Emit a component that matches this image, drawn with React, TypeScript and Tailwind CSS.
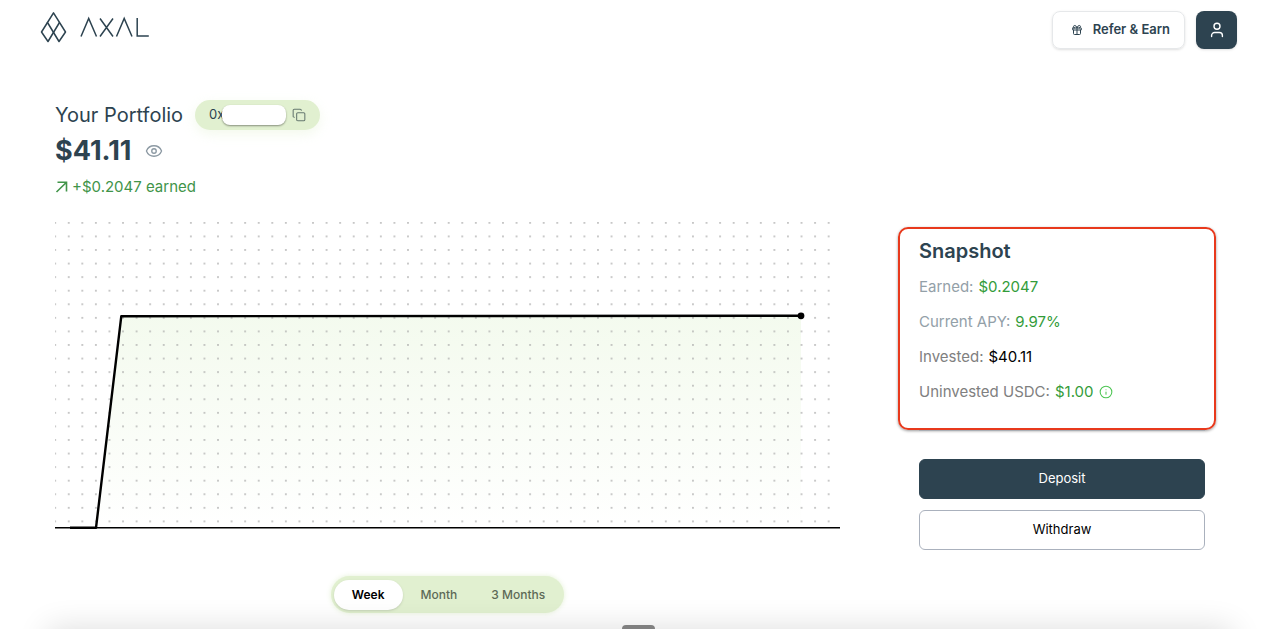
import React, { useState } from "react";
import { Copy, Eye, Gift, Info } from "lucide-react";

const ranges = ["Week", "Month", "3 Months"];

const stats = [
  { label: "Earned:", value: "$0.2047", labelClass: "text-[#93a0a8]", valueClass: "text-[#339c3a]" },
  { label: "Current APY:", value: "9.97%", labelClass: "text-[#93a0a8]", valueClass: "text-[#339c3a]" },
  { label: "Invested:", value: "$40.11", labelClass: "text-[#808080]", valueClass: "text-black" },
  { label: "Uninvested USDC:", value: "$1.00", labelClass: "text-[#808080]", valueClass: "text-[#339c3a]", info: true },
];

function Logo() {
  return (
    <a href="#" aria-label="Axal" className="block text-[#2d4350]">
      <svg width="110" height="32" viewBox="0 0 110 32" fill="none" stroke="currentColor" strokeWidth="1.5" strokeLinejoin="round">
        <path d="M13.5 1.8 L7.5 11.5 L19 30.5 L25.5 21 L13.5 1.8 Z" />
        <path d="M19.5 11.5 L8 30.5 L1.5 21 L7.5 11.5" />
        <path d="M41 25.5 L48.7 7.5 L56.5 25.5" strokeLinejoin="miter" />
        <path d="M60 7.5 L73 25.5 M73 7.5 L60 25.5" />
        <path d="M76.5 25.5 L84.2 7.5 L92 25.5" strokeLinejoin="miter" />
        <path d="M97.2 7 V25 H108.8" strokeLinejoin="miter" />
      </svg>
    </a>
  );
}

function Chart() {
  return (
    <svg viewBox="0 0 785 308" className="block w-full" role="img" aria-label="Portfolio value over the week">
      <defs>
        <pattern id="dots" width="13.57" height="13.57" patternUnits="userSpaceOnUse" x="-6.6" y="-5.9">
          <circle cx="6.78" cy="6.78" r="0.85" fill="#a8a8a8" />
        </pattern>
        <linearGradient id="area" x1="0" y1="0" x2="0" y2="1">
          <stop offset="0" stopColor="#dff2d0" stopOpacity="0.36" />
          <stop offset="0.85" stopColor="#dff2d0" stopOpacity="0.06" />
          <stop offset="1" stopColor="#dff2d0" stopOpacity="0" />
        </linearGradient>
      </defs>
      <path d="M41 306 L66 94 L746 94 V306 Z" fill="url(#area)" />
      <rect width="776" height="303" fill="url(#dots)" />
      <path d="M0 305.8 H785" stroke="#000" strokeWidth="1.6" />
      <path d="M15 305.8 H41 L66.3 94.2 L746 93.8" fill="none" stroke="#000" strokeWidth="2.4" strokeLinejoin="round" />
      <circle cx="746" cy="93.8" r="3.4" fill="#000" />
    </svg>
  );
}

export default function App() {
  const [range, setRange] = useState("Week");
  return (
    <div className="relative min-h-screen overflow-hidden bg-white font-['Inter',sans-serif] text-[#2d4350]">
      <header className="flex items-start justify-between pt-[11px] pr-[43px] pl-10">
        <Logo />
        <div className="flex items-center gap-[11px]">
          <button className="flex h-[38px] items-center gap-[10px] rounded-lg border border-[#e6e8ea] pr-[14px] pl-[18px] text-[13px] font-semibold shadow-sm">
            <Gift size={12} strokeWidth={2} />
            Refer &amp; Earn
          </button>
          <button aria-label="Account" className="flex h-[38px] w-[41px] items-center justify-center rounded-lg bg-[#2d4350] text-white shadow">
            <svg width="14" height="16" viewBox="0 0 14 16" fill="none" stroke="currentColor" strokeWidth="1.4" strokeLinecap="round">
              <circle cx="7" cy="4.2" r="3" />
              <path d="M1.6 14.6 V13.5 A3 3 0 0 1 4.6 10.5 H9.4 A3 3 0 0 1 12.4 13.5 V14.6" />
            </svg>
          </button>
        </div>
      </header>

      <main className="flex gap-[58px] pt-[51px] pr-16 pl-[55px]">
        <section className="min-w-0 flex-1">
          <div className="flex items-center gap-3">
            <h1 className="text-xl">Your Portfolio</h1>
            <div className="flex h-[30px] items-center rounded-full bg-[#e1f0d0] px-[14px] text-[13px] shadow-[0_4px_12px_rgba(225,240,208,0.4)]">
              <span>0x</span>
              <span className="-ml-[2px] h-5 w-16 rounded-lg bg-white shadow-[0_1px_2px_rgba(0,0,0,0.4)]" />
              <button aria-label="Copy address" className="ml-[6px] text-[#66786f]">
                <Copy size={14} strokeWidth={1.8} />
              </button>
            </div>
          </div>
          <div className="mt-[3px] flex h-9 items-center gap-[14px]">
            <p className="text-[27px] font-bold">$41.11</p>
            <button aria-label="Hide balance" className="text-[#8c99a3]">
              <Eye size={18} strokeWidth={1.8} />
            </button>
          </div>
          <p className="mt-[6px] flex h-6 items-center text-[15px] text-[#419449]">
            <svg width="13" height="12" viewBox="0 0 13 12" fill="none" stroke="currentColor" strokeWidth="1.6" className="mr-1">
              <path d="M1.5 11 L11.5 1.2 M2.5 1.2 H11.5 V10.5" />
            </svg>
            +$0.2047 earned
          </p>
          <div className="mt-[23px]">
            <Chart />
          </div>
          <div className="mt-[46px] flex justify-center">
            <div className="flex h-[37px] items-center gap-[2px] rounded-full bg-[#e1f0d0] px-[3px] text-xs shadow-[0_0_5px_rgba(225,240,208,0.9)]">
              {ranges.map((r) => (
                <button
                  key={r}
                  aria-pressed={r === range}
                  onClick={() => setRange(r)}
                  className={
                    r === range
                      ? "h-[30px] rounded-full bg-white px-[18px] font-semibold text-black shadow"
                      : "h-[30px] rounded-full px-4 font-medium text-[#5d6a57]"
                  }
                >
                  {r}
                </button>
              ))}
            </div>
          </div>
        </section>

        <aside className="mt-[127px] w-[318px] shrink-0">
          <section className="rounded-[10px] border-2 border-[#e8391c] px-[19px] pt-2 pb-6 shadow-[0_1px_3px_rgba(0,0,0,0.4)]">
            <h2 className="text-xl font-semibold">Snapshot</h2>
            <dl className="mt-[10px] flex flex-col gap-[11px] text-[15px] leading-6">
              {stats.map((s) => (
                <div key={s.label} className="flex items-center gap-[5px]">
                  <dt className={s.labelClass}>{s.label}</dt>
                  <dd className={s.valueClass}>{s.value}</dd>
                  {s.info && <Info size={14} strokeWidth={1.8} className="text-[#4cc552]" />}
                </div>
              ))}
            </dl>
          </section>
          <div className="mr-[11px] ml-[21px] flex flex-col gap-[11px] border-t border-[#a9afb5] pt-7 text-[13px]">
            <button className="h-10 rounded-md border border-[#2d4350] bg-[#2d4350] text-white">Deposit</button>
            <button className="h-10 rounded-md border border-[#aab1bd] text-black">Withdraw</button>
          </div>
        </aside>
      </main>

      <div className="absolute inset-x-12 top-full h-10 shadow-[0_0_32px_rgba(0,0,0,0.14)]" />
      <div className="absolute bottom-0 left-1/2 h-1 w-[33px] -translate-x-[18px] rounded-t bg-[#808080]" />
    </div>
  );
}
